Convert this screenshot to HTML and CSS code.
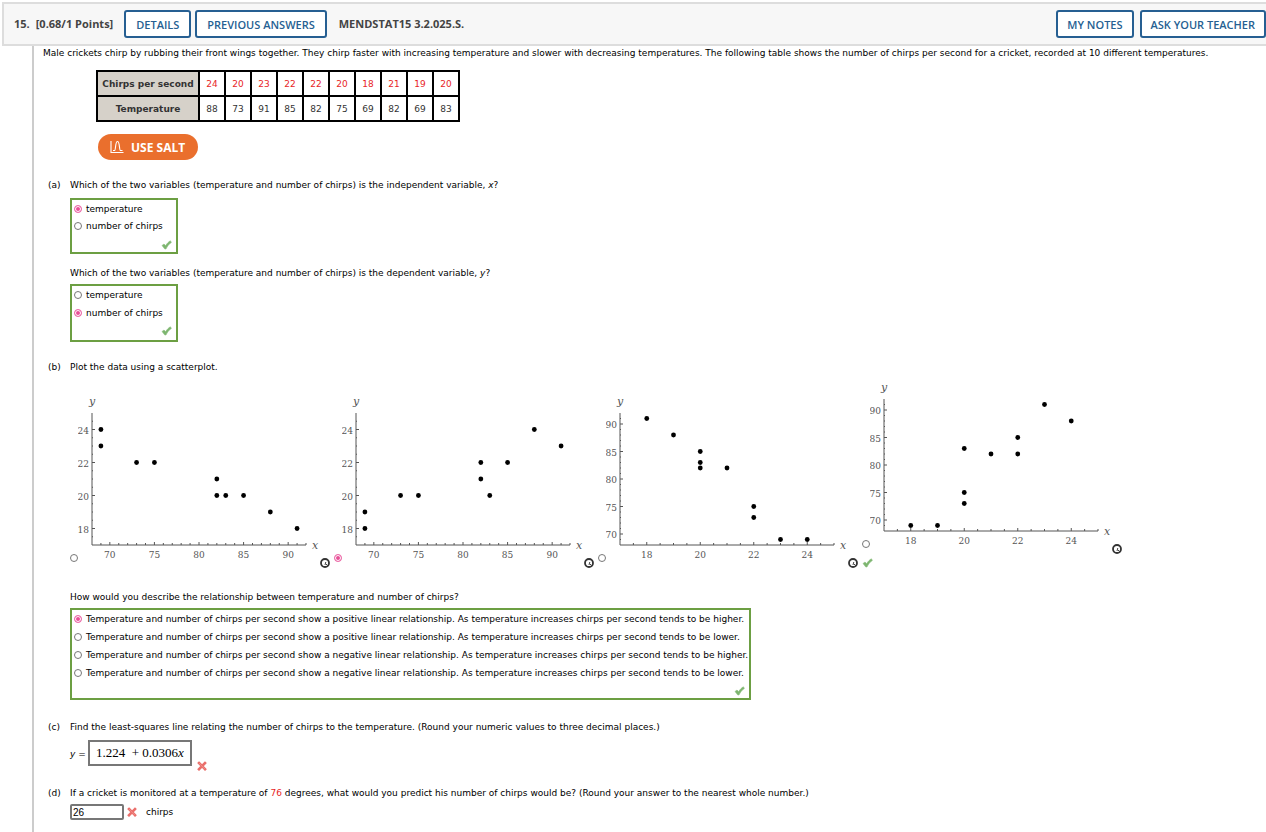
FILE: index.html
```html
<!DOCTYPE html>
<html lang="en">
<head>
  <meta charset="UTF-8">
  <meta name="viewport" content="width=device-width, initial-scale=1.0">
  <title>MENDSTAT15 3.2.025.S.</title>
  <link rel="stylesheet" href="styles.css">
</head>
<body>
  <svg class="defs" aria-hidden="true">
    <symbol id="check" viewBox="0 0 11 10">
      <path d="M1 5.5 L3 4 L4.6 5.6 C6 3.4 7.6 1.8 9.4 .8 L10.4 2.4 C8 4 6.4 6.2 5 9 L3.8 9 Z" fill="#7db56f" stroke="#8fc183" stroke-width=".6"/>
    </symbol>
    <symbol id="cross" viewBox="0 0 10 10">
      <path d="M2 2 L8 8.2 M8 2 L2 8.2" fill="none" stroke="#ea6f6b" stroke-width="2.6" stroke-linecap="square"/>
      <path d="M2 2 L8 8.2" fill="none" stroke="#f08c88" stroke-width="1"/>
    </symbol>
    <symbol id="info" viewBox="0 0 10 10">
      <circle cx="5" cy="5" r="4" fill="#fff" stroke="#333" stroke-width="1.8"/>
      <path d="M5.8 4 L5 7 M6 6 L8 8" fill="none" stroke="#444" stroke-width="1"/>
    </symbol>
  </svg>

  <header class="header">
    <span class="number">15.</span>
    <span class="points">[0.68/1 Points]</span>
    <button type="button">DETAILS</button>
    <button type="button">PREVIOUS ANSWERS</button>
    <span class="code">MENDSTAT15 3.2.025.S.</span>
    <div class="right">
      <button type="button">MY NOTES</button>
      <button type="button">ASK YOUR TEACHER</button>
    </div>
  </header>

  <main class="question">
    <p class="intro">Male crickets chirp by rubbing their front wings together. They chirp faster with increasing temperature and slower with decreasing temperatures. The following table shows the number of chirps per second for a cricket, recorded at 10 different temperatures.</p>

    <table class="data">
      <tr class="chirps">
        <th scope="row">Chirps per second</th>
        <td>24</td><td>20</td><td>23</td><td>22</td><td>22</td><td>20</td><td>18</td><td>21</td><td>19</td><td>20</td>
      </tr>
      <tr>
        <th scope="row">Temperature</th>
        <td>88</td><td>73</td><td>91</td><td>85</td><td>82</td><td>75</td><td>69</td><td>82</td><td>69</td><td>83</td>
      </tr>
    </table>

    <button type="button" class="salt">
      <svg width="14" height="14" viewBox="0 0 14 14" fill="none" stroke="#fff" stroke-width="1.1">
        <path d="M1 1 V12.5 H13.5"/>
        <path d="M3 10.500 H4.500 C6 10.500 5 1.500 7.500 1.500 C10 1.500 9 10.500 10.500 10.500 H12.500"/>
      </svg>
      USE SALT
    </button>

    <section class="part">
      <span>(a)</span>
      <div>
        <p>Which of the two variables (temperature and number of chirps) is the independent variable, <i>x</i>?</p>
        <div class="choices">
          <label><input type="radio" name="indep" checked>temperature</label>
          <label><input type="radio" name="indep">number of chirps</label>
          <svg class="mark"><use href="#check"/></svg>
        </div>
        <p class="second">Which of the two variables (temperature and number of chirps) is the dependent variable, <i>y</i>?</p>
        <div class="choices tall">
          <label><input type="radio" name="dep">temperature</label>
          <label><input type="radio" name="dep" checked>number of chirps</label>
          <svg class="mark"><use href="#check"/></svg>
        </div>
      </div>
    </section>

    <section class="part">
      <span>(b)</span>
      <div>
        <p>Plot the data using a scatterplot.</p>
        <div class="plots" id="plots"></div>
        <p>How would you describe the relationship between temperature and number of chirps?</p>
        <div class="choices long">
          <label><input type="radio" name="rel" checked>Temperature and number of chirps per second show a positive linear relationship. As temperature increases chirps per second tends to be higher.</label>
          <label><input type="radio" name="rel">Temperature and number of chirps per second show a positive linear relationship. As temperature increases chirps per second tends to be lower.</label>
          <label><input type="radio" name="rel">Temperature and number of chirps per second show a negative linear relationship. As temperature increases chirps per second tends to be higher.</label>
          <label><input type="radio" name="rel">Temperature and number of chirps per second show a negative linear relationship. As temperature increases chirps per second tends to be lower.</label>
          <svg class="mark"><use href="#check"/></svg>
        </div>
      </div>
    </section>

    <section class="part">
      <span>(c)</span>
      <div>
        <p>Find the least-squares line relating the number of chirps to the temperature. (Round your numeric values to three decimal places.)</p>
        <div class="equation">
          <span id="eqLabel"><i>y</i> =</span>
          <div class="math" role="textbox" contenteditable="true" spellcheck="false" aria-labelledby="eqLabel">1.224&nbsp; + 0.0306<i>x</i></div>
          <svg class="cross"><use href="#cross"/></svg>
        </div>
      </div>
    </section>

    <section class="part last">
      <span>(d)</span>
      <div>
        <p>If a cricket is monitored at a temperature of <span class="red">76</span> degrees, what would you predict his number of chirps would be? (Round your answer to the nearest whole number.)</p>
        <div class="answer">
          <input type="text" id="prediction" value="26">
          <svg class="cross"><use href="#cross"/></svg>
          <label for="prediction">chirps</label>
        </div>
      </div>
    </section>
  </main>

  <script>
    // axis ranges: temperature 68-92, chirps 17-25
    var temp = { min: 68, max: 92, minor: 1, labels: [70, 75, 80, 85, 90] };
    var chirps = { min: 17, max: 25, minor: 0.5, labels: [18, 20, 22, 24] };

    var plots = [
      { x: temp, y: chirps, points: [[69,24],[69,23],[73,22],[75,22],[82,21],[82,20],[83,20],[85,20],[88,19],[91,18]] },
      { x: temp, y: chirps, checked: true, points: [[69,19],[69,18],[73,20],[75,20],[82,22],[82,21],[83,20],[85,22],[88,24],[91,23]] },
      { x: chirps, y: temp, points: [[18,91],[19,88],[20,85],[20,83],[20,82],[21,82],[22,75],[22,73],[23,69],[24,69]] },
      { x: chirps, y: temp, points: [[18,69],[19,69],[20,83],[20,75],[20,73],[21,82],[22,85],[22,82],[23,91],[24,88]] }
    ];

    var left = 14, top0 = 17, width = 214, height = 132;

    function drawPlot(plot) {
      var bottom = top0 + height;
      function px(v) { return left + (v - plot.x.min) / (plot.x.max - plot.x.min) * width; }
      function py(v) { return bottom - (v - plot.y.min) / (plot.y.max - plot.y.min) * height; }
      var axes = 'M' + left + ' ' + top0 + 'V' + bottom + 'H' + (left + width);
      var text = '', v;
      for (v = plot.x.min + plot.x.minor; v <= plot.x.max; v += plot.x.minor) {
        axes += 'M' + px(v) + ' ' + bottom + 'v' + (plot.x.labels.includes(v) ? -3 : -2);
      }
      for (v = plot.y.min + plot.y.minor; v < plot.y.max; v += plot.y.minor) {
        axes += 'M' + left + ' ' + py(v) + 'h' + (plot.y.labels.includes(v) ? 3 : 1);
      }
      plot.x.labels.forEach(function (n) {
        text += `<text x="${px(n)}" y="${bottom + 13}" text-anchor="middle">${n}</text>`;
      });
      plot.y.labels.forEach(function (n) {
        text += `<text x="${left - 3}" y="${py(n) + 4}" text-anchor="end">${n}</text>`;
      });
      var dots = plot.points.map(function (p) {
        return `<circle cx="${px(p[0])}" cy="${py(p[1])}" r="2.4"/>`;
      }).join('');
      return `<svg class="plot" viewBox="0 0 242 170">
        <path d="${axes}"/>${text}${dots}
        <text class="name" x="${left}" y="9" text-anchor="middle">y</text>
        <text class="name" x="${left + width + 6}" y="${bottom + 4}">x</text>
      </svg>`;
    }

    document.getElementById('plots').innerHTML = plots.map(function (plot, i) {
      return `<div class="option">
        <label><input type="radio" name="plot" aria-label="Scatterplot ${i + 1}" ${plot.checked ? 'checked' : ''}>${drawPlot(plot)}</label>
        <svg class="info"><use href="#info"/></svg>
        ${i == 3 ? '<svg class="mark"><use href="#check"/></svg>' : ''}
      </div>`;
    }).join('');
  </script>
</body>
</html>
```
FILE: styles.css
```css
body {
  font-family: "DejaVu Sans", Verdana, sans-serif;
  font-size: 9px;
  line-height: 14px;
  color: #000;
  background-color: #fff;
  margin: 0;
  padding: 2px 0 0 2px;
  overflow-x: hidden;
}

p {
  margin: 0;
}

button {
  font-family: "Open Sans", sans-serif;
  cursor: pointer;
}

.defs {
  display: none;
}

.header {
  display: flex;
  align-items: center;
  height: 40px;
  padding-left: 10px;
  border: 2px solid #ddd;
  border-right: none;
  background-color: #f7f7f7;
  font-family: "Open Sans", sans-serif;
  font-size: 11px;
  font-weight: bold;
  color: #444;
}

.header button {
  height: 28px;
  padding: 0 10px;
  margin-right: 4px;
  border: 2px solid #265f92;
  border-radius: 3px;
  background-color: #fff;
  color: #265f92;
  font-size: 11px;
  font-weight: 600;
}

.header .number {
  margin-right: 6px;
}

.header .points {
  margin-right: 11px;
}

.header .code {
  margin-left: 8px;
}

.header .right {
  display: flex;
  gap: 6px;
  margin-left: auto;
}

.header .right button {
  margin: 0;
  padding: 0 9px;
}

.question {
  margin-left: 30px;
  padding: 0 0 12px 9px;
  border-left: 2px solid #ccc;
}

.data {
  margin: 10px 0 12px 53px;
  border-collapse: collapse;
  color: #333;
}

.data th, .data td {
  width: 24px;
  height: 23px;
  padding: 0;
  border: 2px solid #000;
  text-align: center;
}

.data th {
  width: 100px;
  background-color: #d6d1c9;
}

.data .chirps td, .red {
  color: #e8251f;
}

.salt {
  display: flex;
  align-items: center;
  gap: 7px;
  width: 100px;
  height: 26px;
  margin-left: 55px;
  padding: 0 12px;
  border: none;
  border-radius: 13px;
  background-color: #ea6f2d;
  color: #fff;
  font-size: 12px;
  font-weight: bold;
  white-space: nowrap;
}

.salt svg {
  flex: none;
}

.part {
  display: grid;
  grid-template-columns: 22px 1fr;
  margin: 18px 0 0 5px;
}

.part.last {
  margin-top: 15px;
}

input[type="radio"] {
  appearance: none;
  flex: none;
  width: 8px;
  height: 8px;
  margin: 0;
  border: 1px solid #777;
  border-radius: 50%;
  background-color: #fff;
}

input[type="radio"]:checked {
  border-color: #ec6fab;
  background-color: #e84f97;
  box-shadow: inset 0 0 0 1px #fff;
}

.choices {
  display: flex;
  flex-direction: column;
  width: 102px;
  margin-top: 6px;
  padding: 0 1px 2px 1px;
  border: 2px solid #6c9f43;
}

.choices label {
  display: flex;
  align-items: center;
  gap: 4px;
  padding-left: 1px;
  height: 17px;
  white-space: nowrap;
}

.choices.tall, .choices.long {
  margin-top: 4px;
  padding-bottom: 4px;
}

.choices.tall label, .choices.long label {
  height: 18px;
}

.choices.long {
  width: max-content;
  padding-bottom: 2px;
  margin-bottom: 2px;
}

.mark {
  width: 11px;
  height: 10px;
}

.choices .mark {
  align-self: flex-end;
  margin: 6px 3px 0 0;
}

.choices.tall .mark, .choices.long .mark {
  margin-top: 4px;
}

.second {
  margin-top: 12px;
}

.plots {
  display: flex;
  align-items: flex-end;
  height: 194px;
  padding-bottom: 2px;
  margin-bottom: 20px;
}

.option {
  display: flex;
  flex-wrap: wrap;
  align-items: flex-end;
  width: 264px;
}

.option label {
  display: flex;
  align-items: flex-end;
}

.option input {
  margin-bottom: 6px;
}

.option .info {
  width: 10px;
  height: 10px;
}

.option .mark {
  margin-top: 4px;
}

.plot {
  width: 242px;
  height: 170px;
  margin-bottom: 2px;
  font-family: "DejaVu Serif", serif;
  font-size: 9px;
  fill: #555;
}

.plot path {
  fill: none;
  stroke: #555;
  stroke-width: 1;
}

.plot circle {
  fill: #000;
}

.plot .name {
  font-size: 11px;
  font-style: italic;
}

.equation {
  display: flex;
  align-items: flex-start;
  margin-top: 6px;
}

.equation span {
  width: 18px;
  padding-top: 7px;
}

.math {
  padding: 0 6px;
  border: 2px solid #777;
  font-family: "Liberation Serif", serif;
  font-size: 13px;
  line-height: 22px;
  white-space: nowrap;
}

.cross {
  width: 10px;
  height: 10px;
}

.equation .cross {
  margin: 21px 0 0 5px;
}

.answer {
  display: flex;
  align-items: center;
  margin-top: 4px;
}

.answer input {
  box-sizing: border-box;
  width: 54px;
  height: 16px;
  margin-right: 3px;
  padding: 0 1px;
  border: 2px solid #777;
  border-radius: 2px;
  font-family: "Liberation Sans", Arial, sans-serif;
  font-size: 10px;
}

.answer label {
  margin-left: 9px;
}
```
